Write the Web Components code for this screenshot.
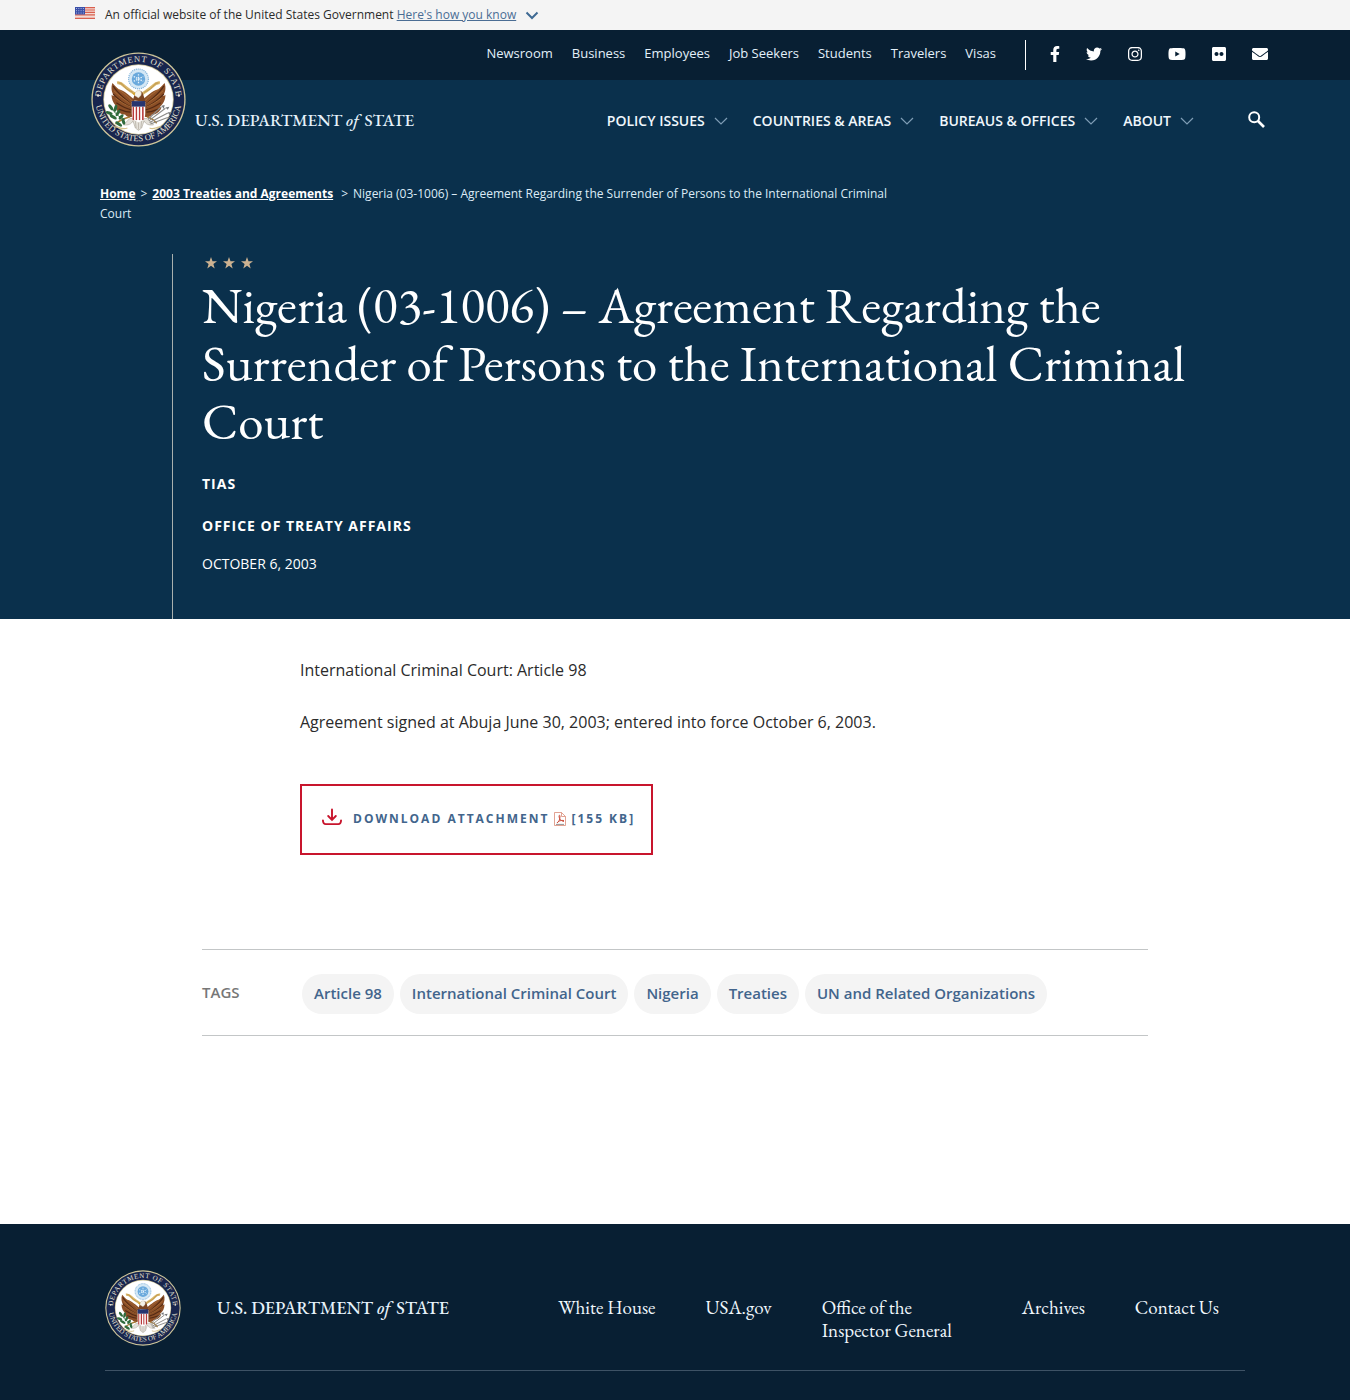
<!DOCTYPE html>
<html lang="en">
<head>
<meta charset="utf-8">
<meta name="viewport" content="width=device-width, initial-scale=1">
<title>Nigeria (03-1006) – Agreement Regarding the Surrender of Persons to the International Criminal Court</title>
<style>
  :root {
    --navy-dark: #081f33;
    --navy: #0a304c;
    --link: #4a6d94;
    --sans: "Open Sans", "Liberation Sans", sans-serif;
    --serif: "EB Garamond", "Liberation Serif", serif;
  }
  body { margin: 0; background: #fff; color: #2b2b2b; font-family: var(--sans); font-size: 16px; line-height: 26px; }
</style>
</head>
<body>
<gov-banner></gov-banner>
<site-header>
  <util-link slot="utility">Newsroom</util-link>
  <util-link slot="utility">Business</util-link>
  <util-link slot="utility">Employees</util-link>
  <util-link slot="utility">Job Seekers</util-link>
  <util-link slot="utility">Students</util-link>
  <util-link slot="utility">Travelers</util-link>
  <util-link slot="utility">Visas</util-link>
  <social-link slot="social" name="facebook"></social-link>
  <social-link slot="social" name="twitter"></social-link>
  <social-link slot="social" name="instagram"></social-link>
  <social-link slot="social" name="youtube"></social-link>
  <social-link slot="social" name="flickr"></social-link>
  <social-link slot="social" name="email"></social-link>
  <menu-button slot="menu">Policy Issues</menu-button>
  <menu-button slot="menu">Countries &amp; Areas</menu-button>
  <menu-button slot="menu">Bureaus &amp; Offices</menu-button>
  <menu-button slot="menu">About</menu-button>
</site-header>
<main>
  <page-hero>
    <bread-crumbs slot="crumbs"><span>Nigeria (03-1006) – Agreement Regarding the Surrender of Persons to the International Criminal</span> <span>Court</span></bread-crumbs>
    <span slot="title">Nigeria (03-1006) – Agreement Regarding the Surrender of Persons to the International Criminal Court</span>
    <span slot="type">TIAS</span>
    <span slot="office">OFFICE OF TREATY AFFAIRS</span>
    <span slot="date">OCTOBER 6, 2003</span>
  </page-hero>
  <article-body>
    <article-text>International Criminal Court: Article 98</article-text>
    <article-text>Agreement signed at Abuja June 30, 2003; entered into force October 6, 2003.</article-text>
    <download-link></download-link>
  </article-body>
  <tag-list>
    <tag-pill>Article 98</tag-pill>
    <tag-pill>International Criminal Court</tag-pill>
    <tag-pill>Nigeria</tag-pill>
    <tag-pill>Treaties</tag-pill>
    <tag-pill>UN and Related Organizations</tag-pill>
  </tag-list>
</main>
<site-footer>
  <footer-link>White House</footer-link>
  <footer-link>USA.gov</footer-link>
  <footer-link wide>Office of the<br>Inspector General</footer-link>
  <footer-link>Archives</footer-link>
  <footer-link>Contact Us</footer-link>
</site-footer>

<script>
const define = (name, html) => {
  customElements.define(name, class extends HTMLElement {
    connectedCallback() {
      if (this.shadowRoot) return;
      const root = this.attachShadow({ mode: 'open' });
      const t = document.createElement('template');
      t.innerHTML = '<style>*{box-sizing:border-box}</style>' + (typeof html === 'function' ? html(this) : html);
      root.append(t.content.cloneNode(true));
    }
  });
};

/* Department seal */
define('state-seal', () => {
  const ticks = Array.from({ length: 7 }, (_, i) => `<path d="M${53.5 + i * 2} 69v17" stroke="${i % 2 ? '#fff' : '#b83a3a'}" stroke-width="2"/>`).join('');
  const wing = `
    <path d="M55 60C49 56 43 49 35 47 31 44 29 41 27 39c-2 6-1 12 2 16-1 1-2 0-3-1 0 7 3 12 7 15l-2 1c2 6 7 9 12 9 3 4 7 4 10 2Z" fill="#8c4f27"/>
    <path d="M28 43c5 9 12 13 24 24M28 53c6 7 13 12 23 17M32 64c6 4 11 7 19 9M35 72c5 2 9 4 15 4" fill="none" stroke="#532a14" stroke-width="1.6"/>
    <path d="M31 44c6 6 14 9 22 19M29 49c7 7 14 11 23 18M31 58c6 5 13 9 20 12" fill="none" stroke="#b5783c" stroke-width=".9"/>`;
  return `
  <style>:host{display:block} svg{display:block;width:100%;height:auto}</style>
  <svg viewBox="0 0 120 120" role="img" aria-label="Department of State seal">
    <defs>
      <path id="top" d="M12.500 60A47.500 47.500 0 0 1 107.500 60"/>
      <path id="bottom" d="M5.300 58A54.700 54.700 0 0 0 114.700 58"/>
    </defs>
    <circle cx="60" cy="60" r="59.500" fill="#cfc69a"/>
    <circle cx="60" cy="60" r="57.800" fill="#18254e"/>
    <circle cx="60" cy="60" r="44.500" fill="#c9bf91"/>
    <circle cx="60" cy="60" r="43.500" fill="#fff"/>
    <g fill="#e6e3d4" font-family="Liberation Serif, serif" font-size="11">
      <text letter-spacing="1"><textPath href="#top" startOffset="50%" text-anchor="middle">DEPARTMENT OF STATE</textPath></text>
      <text><textPath href="#bottom" startOffset="50%" text-anchor="middle">UNITED STATES OF AMERICA</textPath></text>
    </g>
    <circle cx="9" cy="55" r="1.500" fill="#e6e3d4"/><circle cx="111" cy="55" r="1.500" fill="#e6e3d4"/>
    <circle cx="60" cy="34" r="12.500" fill="#d5e8f5" stroke="#86b5dc" stroke-width="1.500" stroke-dasharray="1.500 1"/>
    <circle cx="60" cy="34" r="8.500" fill="#6aa9dc"/>
    <path d="M60 28v12M54 31l12 6M54 37l12-6" stroke="#e7f3fb" stroke-width="1.600" stroke-dasharray="1.800 1.400"/>
    <g>${wing}</g><g transform="matrix(-1 0 0 1 120 0)">${wing}</g>
    <path d="M33 39c5-1 7 2 10 5s7 5 11 8l5 4M87 39c-5-1-7 2-10 5s-7 5-11 8l-5 4" fill="none" stroke="#d9b568" stroke-width="3.600"/>
    <path d="M35 39c4 0 5 3 8 6s6 4 10 6M85 39c-4 0-5 3-8 6s-6 4-10 6" fill="none" stroke="#a37b34" stroke-width=".7"/>
    <path d="M53 61c2-8 3-11 8-12 3 0 4 2 5 5l3 9Z" fill="#7b4422"/>
    <path d="M55 55c0-5 3-7 7-6 2 1 2 4 1 6l-3 3Z" fill="#f4f1e8" stroke="#b9ab93" stroke-width=".5"/>
    <path d="M56 51l-4 1 3 3Z" fill="#d5a32f"/>
    <path d="M49 84l-8 8c6 1 10-1 12-5l3 9 4 3 4-3 3-9c2 4 6 6 12 5l-8-8Z" fill="#e4e1da" stroke="#a69e92" stroke-width=".7"/>
    <path d="M56 87l1 9M60 88v10M64 87l-1 9" stroke="#a69e92" stroke-width=".7"/>
    <path d="M51.500 63h17v15c0 6-4 9-8.500 11-4.500-2-8.500-5-8.500-11Z" fill="#fff"/>
    ${ticks}
    <path d="M51.500 62h17v7h-17Z" fill="#26356f"/>
    <path d="M49 82c-8 2-13 4-18 9M71 82c5 1 8 3 12 8" fill="none" stroke="#a87b35" stroke-width="2"/>
    <path d="M46 96c-8 3-12-3-17-1M74 96c6 3 10-3 15-1" fill="none" stroke="#d6c28c" stroke-width="1.500"/>
    <g fill="#2f6b3c"><ellipse cx="25" cy="70" rx="2" ry="4.500" transform="rotate(-35 25 70)"/><ellipse cx="31" cy="71" rx="2" ry="4.500" transform="rotate(12 31 71)"/><ellipse cx="23" cy="77" rx="2" ry="4.500" transform="rotate(-70 23 77)"/><ellipse cx="34" cy="77" rx="2" ry="4.500" transform="rotate(30 34 77)"/><ellipse cx="28" cy="82" rx="2" ry="5" transform="rotate(-60 28 82)"/><ellipse cx="38" cy="82" rx="2" ry="4" transform="rotate(40 38 82)"/><ellipse cx="35" cy="91" rx="2" ry="5" transform="rotate(-55 35 91)"/><ellipse cx="41" cy="88" rx="2" ry="4" transform="rotate(-15 41 88)"/></g>
    <path d="M27 71c3 7 8 11 16 14" fill="none" stroke="#2f6b3c" stroke-width="1.200"/>
    <path d="M73 87l21-16M74 89l23-12M75 91l21-8M72 85l17-16" stroke="#8c8b88" stroke-width="1.500"/>
    <path d="M89 68l4-1-1 5ZM94 70l5-1-2 4ZM97 76l5 0-3 4ZM96 82l4 0-2 3Z" fill="#74777a"/>
  </svg>`;
});

define('state-wordmark', `
  <style>:host{display:block;font-family:var(--serif);color:#e6f2fb;white-space:nowrap;font-weight:500} em{margin-right:2px}</style>
  U.S. DEPARTMENT <em>of</em> STATE`);

define('gov-banner', `
  <style>
    :host{display:block;background:#f4f4f4;color:#2b2b2b;font-size:12px;line-height:30px}
    div{max-width:1200px;margin:0 auto;display:flex;align-items:flex-start}
    .flag{width:20px;height:12px;margin:7px 10px 0 0;flex:none}
    a{color:var(--link)} .chev{margin:11px 0 0 9px;width:14px;height:9px}
    span{white-space:pre}
  </style>
  <div>
    <svg class="flag" viewBox="0 0 20 12" aria-hidden="true"><path fill="#f3d9d3" d="M0 0h20v12H0z"/><path d="M0 .6h20M0 3h20M0 5.400h20M0 7.800h20M0 11.300h20" stroke="#d9604f" stroke-width="1.200"/><path fill="#3a4fa8" d="M0 0h10v7.500H0z"/><path d="M1 1.500h8M1 3.700h8M1 6h8" stroke="#c7cdec" stroke-width=".8" stroke-dasharray="1 1.300"/></svg>
    <span>An official website of the United States Government </span><a href="#know">Here's how you know</a>
    <svg class="chev" viewBox="0 0 14 9" fill="none" stroke="#3f6a93" stroke-width="2" aria-hidden="true"><path d="M1.500 1.500 7 7l5.500-5.500"/></svg>
  </div>`);

define('util-link', `
  <style>:host{display:block;font-size:13px;line-height:20px} a{color:#e3f0fa;text-decoration:none;white-space:nowrap}</style>
  <a href="#"><slot></slot></a>`);

const SOCIAL = {
  facebook: [320, 'Facebook', 'M279.140 288l14.220-92.660h-88.910v-60.130c0-25.350 12.420-50.060 52.240-50.060h40.420V6.260S260.430 0 225.360 0c-73.220 0-121.080 44.380-121.080 124.720v70.620H22.890V288h81.390v224h100.170V288z'],
  twitter: [512, 'Twitter', 'M459.370 151.716c.325 4.548.325 9.097.325 13.645 0 138.720-105.583 298.558-298.558 298.558-59.452 0-114.680-17.219-161.137-47.106 8.447.974 16.568 1.299 25.340 1.299 49.055 0 94.213-16.568 130.274-44.832-46.132-.975-84.792-31.188-98.112-72.772 6.498.974 12.995 1.624 19.818 1.624 9.421 0 18.843-1.300 27.614-3.573-48.081-9.747-84.143-51.980-84.143-102.985v-1.299c13.969 7.797 30.214 12.670 47.431 13.319-28.264-18.843-46.781-51.005-46.781-87.391 0-19.492 5.197-37.360 14.294-52.954 51.655 63.675 129.300 105.258 216.365 109.807-1.624-7.797-2.599-15.918-2.599-24.040 0-57.828 46.782-104.934 104.934-104.934 30.213 0 57.502 12.670 76.670 33.137 23.715-4.548 46.456-13.320 66.599-25.340-7.798 24.366-24.366 44.833-46.132 57.827 21.117-2.273 41.584-8.122 60.426-16.243-14.292 20.791-32.161 39.308-52.628 54.253z'],
  instagram: [448, 'Instagram', 'M224.100 141c-63.600 0-114.900 51.300-114.900 114.900s51.300 114.900 114.900 114.900S339 319.500 339 255.900 287.700 141 224.100 141zm0 189.600c-41.100 0-74.700-33.500-74.700-74.700s33.500-74.700 74.700-74.700 74.700 33.500 74.700 74.700-33.600 74.700-74.700 74.700zm146.400-194.300c0 14.900-12 26.800-26.800 26.800-14.900 0-26.800-12-26.800-26.800s12-26.800 26.800-26.800 26.800 12 26.800 26.800zm76.100 27.200c-1.700-35.900-9.900-67.700-36.200-93.900-26.200-26.200-58-34.400-93.900-36.200-37-2.100-147.900-2.100-184.900 0-35.800 1.700-67.600 9.900-93.900 36.100s-34.400 58-36.200 93.900c-2.100 37-2.100 147.900 0 184.900 1.700 35.900 9.900 67.700 36.200 93.900s58 34.400 93.900 36.200c37 2.100 147.900 2.100 184.900 0 35.900-1.700 67.700-9.900 93.900-36.200 26.200-26.200 34.400-58 36.200-93.900 2.100-37 2.100-147.800 0-184.800zM398.800 388c-7.800 19.600-22.900 34.700-42.600 42.600-29.500 11.700-99.500 9-132.100 9s-102.700 2.600-132.100-9c-19.600-7.800-34.700-22.900-42.600-42.600-11.700-29.500-9-99.500-9-132.100s-2.600-102.700 9-132.100c7.800-19.600 22.900-34.700 42.600-42.600 29.500-11.700 99.500-9 132.100-9s102.700-2.600 132.100 9c19.600 7.800 34.700 22.900 42.600 42.600 11.700 29.500 9 99.500 9 132.100s2.700 102.700-9 132.100z'],
  youtube: [576, 'YouTube', 'M549.655 124.083c-6.281-23.650-24.787-42.276-48.284-48.597C458.781 64 288 64 288 64S117.220 64 74.629 75.486c-23.497 6.322-42.003 24.947-48.284 48.597-11.412 42.867-11.412 132.305-11.412 132.305s0 89.438 11.412 132.305c6.281 23.650 24.787 41.500 48.284 47.821C117.220 448 288 448 288 448s170.780 0 213.371-11.486c23.497-6.321 42.003-24.171 48.284-47.821 11.412-42.867 11.412-132.305 11.412-132.305s0-89.438-11.412-132.305zm-317.510 213.508V175.185l142.739 81.205-142.739 81.201z'],
  flickr: [448, 'Flickr', 'M400 32H48C21.500 32 0 53.500 0 80v352c0 26.500 21.500 48 48 48h352c26.500 0 48-21.500 48-48V80c0-26.500-21.500-48-48-48zM144.500 319c-35.100 0-63.500-28.400-63.500-63.500s28.400-63.500 63.500-63.500 63.500 28.400 63.500 63.500-28.400 63.500-63.500 63.500zm159 0c-35.100 0-63.500-28.400-63.500-63.500s28.400-63.500 63.500-63.500 63.500 28.400 63.500 63.500-28.400 63.500-63.500 63.500z'],
  email: [512, 'Email', 'M502.300 190.800c3.900-3.100 9.700-.2 9.700 4.700V400c0 26.500-21.500 48-48 48H48c-26.500 0-48-21.500-48-48V195.600c0-5 5.700-7.800 9.700-4.700 22.400 17.400 52.100 39.500 154.100 113.600 21.100 15.400 56.700 47.800 92.200 47.600 35.700.3 72-32.800 92.300-47.600 102-74.100 131.600-96.300 154-113.700zM256 320c23.200.4 56.600-29.200 73.400-41.400 132.700-96.300 142.800-104.700 173.400-128.700 5.800-4.500 9.200-11.500 9.200-18.900v-19c0-26.500-21.500-48-48-48H48c-26.500 0-48 21.500-48 48v19c0 7.400 3.400 14.300 9.200 18.900 30.600 23.900 40.700 32.400 173.400 128.700 16.800 12.200 50.200 41.800 73.400 41.400z']
};
define('social-link', el => {
  const [w, label, d] = SOCIAL[el.getAttribute('name')];
  return `<style>:host{display:block} a{display:block;color:#fff} svg{display:block;height:16px;width:auto}</style>
  <a href="#" aria-label="${label}"><svg viewBox="0 0 ${w} 512" fill="currentColor" aria-hidden="true"><path d="${d}"/></svg></a>`;
});

define('menu-button', `
  <style>
    :host{display:block}
    button{all:unset;display:flex;align-items:center;gap:9px;color:#f0f7fc;font-family:var(--sans);font-size:14px;line-height:20px;font-weight:600;text-transform:uppercase;white-space:nowrap;cursor:pointer}
    svg{width:14px;height:8px}
  </style>
  <button type="button"><slot></slot><svg viewBox="0 0 14 8" fill="none" stroke="#7f9db5" stroke-width="1.200" aria-hidden="true"><path d="M1 1l6 6 6-6"/></svg></button>`);

define('site-header', `
  <style>
    :host{display:block;background:linear-gradient(var(--navy-dark) 50px,var(--navy) 50px)}
    header{max-width:1200px;margin:0 auto;padding:0 7px 0 16px;display:grid;grid-template-columns:auto 1fr;grid-template-rows:50px auto}
    .brand{grid-row:1 / 3;display:flex;align-items:flex-end;gap:9px;padding-top:22px;text-decoration:none;font-size:17px;line-height:20px}
    state-seal{width:95px} state-wordmark{padding-bottom:17px}
    .utility{display:flex;justify-content:flex-end;align-items:center}
    .links{display:flex;gap:19px;padding-bottom:5px}
    .social{display:flex;gap:26px;margin-left:29px;padding:0 0 2px 24px;height:30px;align-items:center;border-left:1px solid #fff}
    .menu{display:flex;justify-content:flex-end;align-items:center;gap:25px;padding-top:15px}
    .search{all:unset;cursor:pointer;margin:0 3px 4px 29px;width:17px;height:17px}
    .search svg{display:block}
  </style>
  <header>
    <a class="brand" href="#"><state-seal></state-seal><state-wordmark></state-wordmark></a>
    <div class="utility">
      <nav class="links" aria-label="Utility"><slot name="utility"></slot></nav>
      <div class="social"><slot name="social"></slot></div>
    </div>
    <nav class="menu" aria-label="Main"><slot name="menu"></slot>
      <button class="search" type="button" aria-label="Search"><svg width="17" height="17" viewBox="0 0 17 17" fill="none" stroke="#fff" aria-hidden="true"><circle cx="6.200" cy="6.200" r="5" stroke-width="2"/><path d="M10 10l6 6" stroke-width="2.600"/></svg></button>
    </nav>
  </header>`);

define('bread-crumbs', `
  <style>
    :host{display:block;max-width:815px;color:#dcebf6;font-size:12px;line-height:20px}
    a{color:#fff;font-weight:700} a + span{margin:0 5px} a + .last{margin-left:8px}
  </style>
  <nav aria-label="Breadcrumb"><a href="#">Home</a><span>&gt;</span><a href="#">2003 Treaties and Agreements</a><span class="last">&gt;</span><slot></slot></nav>`);

define('page-hero', `
  <style>
    :host{display:block;background:var(--navy);color:#fff}
    .wrap{max-width:1200px;margin:0 auto;padding:37px 25px 0}
    .panel{margin:30px 0 0 72px;padding:3px 0 45px 29px;border-left:1px solid #a9b0ae}
    .stars{display:flex;gap:6px;margin-left:3px;padding-bottom:7px}
    .stars svg{width:12px;height:12px}
    h1{margin:0;font-family:var(--serif);font-weight:400;font-size:51px;line-height:58px;max-width:1000px}
    p{margin:0;font-size:14px;line-height:20px}
    .label{font-weight:700;letter-spacing:1px;margin-top:22px}
    h1 + .label{margin-top:24px}
    .date{margin-top:18px}
  </style>
  <section class="wrap">
    <slot name="crumbs"></slot>
    <div class="panel">
      <div class="stars" aria-hidden="true">${'<svg viewBox="0 0 12 12" fill="#cdb291"><path d="M6 0l1.500 4.300H12L8.400 7l1.300 4.500L6 8.800l-3.700 2.700L3.600 7 0 4.300h4.500z"/></svg>'.repeat(3)}</div>
      <h1><slot name="title"></slot></h1>
      <p class="label"><slot name="type"></slot></p>
      <p class="label"><slot name="office"></slot></p>
      <p class="date"><slot name="date"></slot></p>
    </div>
  </section>`);

define('article-body', `
  <style>:host{display:block;max-width:750px;margin:0 auto;padding:38px 0 94px}</style>
  <article><slot></slot></article>`);

define('article-text', `<style>:host{display:block;margin-bottom:26px} p{margin:0}</style><p><slot></slot></p>`);

define('download-link', `
  <style>
    :host{display:block;padding-top:23px}
    a{display:flex;width:fit-content;align-items:center;border:2px solid #c8152d;padding:22px 16px 24px 20px;color:#42658c;font-size:12px;line-height:19px;font-weight:700;letter-spacing:2px;text-decoration:none;white-space:nowrap}
    .down{width:20px;height:18px;margin:0 11px 3px 0}
    .pdf{width:12px;height:14px;margin:0 5px}
  </style>
  <a href="#"><svg class="down" viewBox="0 0 21 18" fill="none" stroke="#c8152d" stroke-width="2" stroke-linecap="round" aria-hidden="true"><path d="M10.500 1v11M6.500 8l4 4 4-4M1 12.500c0 3 1 4 3 4h13c2 0 3-1 3-4"/></svg><span>DOWNLOAD ATTACHMENT</span><svg class="pdf" viewBox="0 0 12 14" fill="none" stroke="#db8c77" aria-hidden="true"><path d="M.5.5h7l4 4v9H.5zM7.500.5v4h4" stroke-width=".8"/><path d="M3 11c2-1 3-4 3-7 0-1-1-1-1 0 0 3 2 5 5 5.500M3 11c1-2 4-3 7-2.500" stroke="#cc5141"/><path d="M2 12.400h8" stroke="#777" stroke-width=".8"/></svg><span>[155 KB]</span></a>`);

define('tag-list', `
  <style>
    :host{display:block;max-width:946px;margin:0 auto 188px;border-top:1px solid #c3c6c7;border-bottom:1px solid #c3c6c7}
    section{display:flex;padding:24px 0 21px}
    h2{margin:0;width:100px;flex:none;font-size:15px;line-height:36px;font-weight:600;color:#777}
    div{display:flex;flex-wrap:wrap;gap:6px}
  </style>
  <section><h2>TAGS</h2><div><slot></slot></div></section>`);

define('tag-pill', `
  <style>:host{display:block} a{display:block;padding:0 12px 2px;border-radius:20px;background:#f4f4f4;color:#42658c;font-size:15px;line-height:38px;font-weight:600;text-decoration:none}</style>
  <a href="#"><slot></slot></a>`);

define('footer-link', `
  <style>:host{display:block;font-family:var(--serif);font-size:19px;line-height:23px} :host([wide]){padding-right:20px} a{color:#f0f7fc;text-decoration:none}</style>
  <a href="#"><slot></slot></a>`);

define('site-footer', `
  <style>
    :host{display:block;background:var(--navy-dark);padding:46px 0 29px}
    footer{max-width:1140px;margin:0 auto;padding-bottom:24px;display:flex;border-bottom:1px solid #3e5265}
    .brand{display:flex;align-items:center;gap:36px;text-decoration:none;font-size:18px}
    state-seal{width:76px}
    nav{flex:1;display:flex;justify-content:flex-end;gap:50px;padding:26px 26px 0 50px}
  </style>
  <footer><a class="brand" href="#"><state-seal></state-seal><state-wordmark></state-wordmark></a><nav aria-label="Footer"><slot></slot></nav></footer>`);
</script>
</body>
</html>
